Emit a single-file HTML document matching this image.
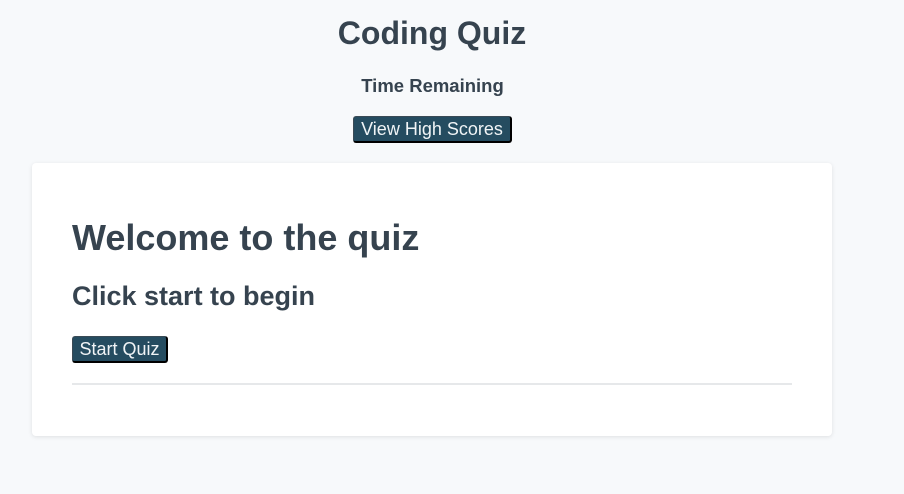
<!DOCTYPE html>
<html><head><style>
body{margin:0;width:904px;height:494px;background:#f7f9fb;font-family:"Liberation Sans",Arial,sans-serif;color:#36434f;position:relative;overflow:hidden}
.a{position:absolute;margin:0;white-space:nowrap}
.btn{position:absolute;background:#254c60;color:#f0f4f6;font-size:18px;border:1px solid #3a4a55;border-right:2px solid #000;border-bottom:2px solid #000;border-radius:3px;box-sizing:border-box;text-align:center;line-height:25px}
.card{position:absolute;left:32px;top:163px;width:800px;height:273px;background:#fff;border-radius:4px;box-shadow:0 1px 4px rgba(0,0,0,0.1)}
</style></head><body>
<div class="a" style="left:0;width:864px;text-align:center;top:15px;font-size:32px;font-weight:bold">Coding Quiz</div>
<div class="a" style="left:0;width:865px;text-align:center;top:75px;font-size:18.5px;font-weight:bold">Time Remaining</div>
<div class="btn" style="left:353px;top:116px;width:159px;height:27px">View High Scores</div>
<div class="card">
<div class="a" style="left:40px;top:54px;font-size:36px;font-weight:bold">Welcome to the quiz</div>
<div class="a" style="left:40px;top:118px;font-size:27px;font-weight:bold">Click start to begin</div>
<div class="btn" style="left:40px;top:173px;width:96px;height:27px">Start Quiz</div>
<div style="position:absolute;left:40px;top:220px;width:720px;height:2px;background:#e6e8ea"></div>
</div>
</body></html>
